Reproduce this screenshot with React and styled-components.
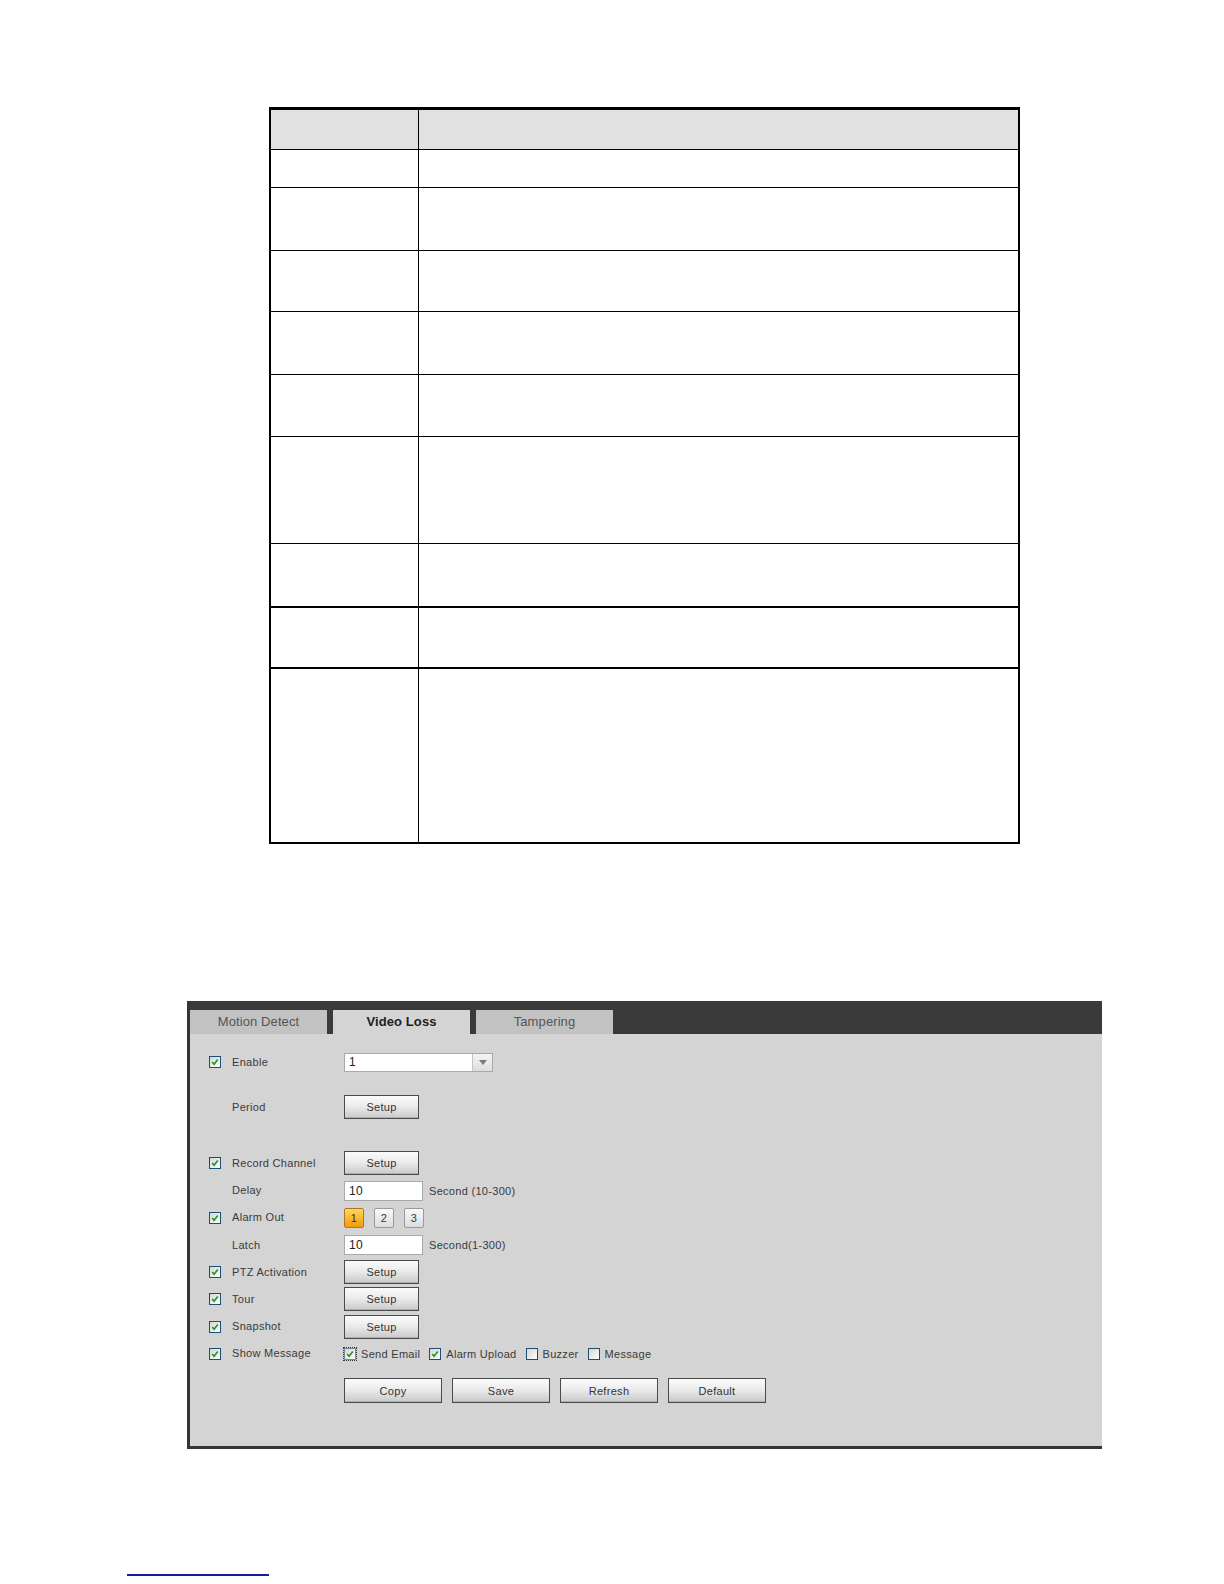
import React from "react"
import styled, { createGlobalStyle, css } from "styled-components"

const GlobalStyle = createGlobalStyle`
  html, body {
    margin: 0;
    padding: 0;
    background: #ffffff;
  }
  body {
    font-family: "Liberation Sans", Arial, sans-serif;
    width: 1224px;
    min-height: 1584px;
  }
`

const Page = styled.div`
  position: relative;
  width: 1224px;
  height: 1584px;
  padding-top: 107px;
  box-sizing: border-box;
  overflow: hidden;
`

/* ---------- parameter table (empty) ---------- */

const Table = styled.table`
  margin-left: 269px;
  width: 751px;
  border-collapse: collapse;
  border-top: 3px solid #000;
  border-left: 2px solid #000;
  border-right: 2px solid #000;
  border-bottom: 2px solid #000;
`

const Cell = styled.td`
  padding: 0;
  border: 1px solid #000;
  border-top-width: ${p => (p.$thick ? 2 : 1)}px;
  height: ${p => p.$h}px;
  box-sizing: border-box;
  background: ${p => (p.$head ? "#e1e1e1" : "#fff")};
  &:first-child {
    width: 148px;
  }
`

const rows = [
  { h: 41, head: true },
  { h: 38 },
  { h: 63 },
  { h: 61 },
  { h: 63 },
  { h: 62 },
  { h: 107 },
  { h: 63 },
  { h: 61, thick: true },
  { h: 175, thick: true },
]

/* ---------- alarm panel ---------- */

const Panel = styled.div`
  margin-top: 157px;
  margin-left: 187px;
  width: 915px;
  height: 448px;
  background: #d4d4d4;
  border-left: 3px solid #353535;
  border-bottom: 3px solid #353535;
  box-sizing: border-box;
  font-size: 11px;
  color: #3a3a3a;
  letter-spacing: 0.3px;
`

const TabBar = styled.div`
  display: flex;
  align-items: flex-end;
  gap: 6px;
  height: 33px;
  background: #3a3a3a;
`

const Tab = styled.div`
  width: 137px;
  height: 24px;
  display: flex;
  align-items: center;
  justify-content: center;
  font-size: 13px;
  letter-spacing: 0.1px;
  color: #555;
  background: #c2c2c2;
  ${p =>
    p.$active &&
    css`
      background: #d4d4d4;
      color: #1e1e1e;
      font-weight: bold;
    `}
`

const Form = styled.div`
  display: flex;
  flex-direction: column;
  padding-left: 19px;
`

const Row = styled.div`
  display: grid;
  grid-template-columns: 23px 112px 1fr;
  align-items: center;
  height: 27.2px;
  margin-top: ${p => p.$top || 0}px;
`

const Label = styled.span`
  line-height: 1;
`

const Controls = styled.div`
  display: flex;
  align-items: center;
  gap: ${p => p.$gap || 0}px;
`

const Box = styled.span`
  display: inline-flex;
  align-items: center;
  justify-content: center;
  width: 10px;
  height: 10px;
  border: 1px solid #1d4f72;
  background: linear-gradient(135deg, #d6d6d6, #fdfdfd);
  box-sizing: content-box;
  flex: none;
  ${p =>
    p.$dotted &&
    css`
      outline: 1px dotted #333;
      outline-offset: 0px;
      border-color: #7a8a96;
    `}
`

const Check = ({ on = true, dotted }) => (
  <Box $dotted={dotted}>
    {on && (
      <svg width="8" height="8" viewBox="0 0 8 8">
        <path d="M1.2 4 L3.1 6.2 L6.8 1.5" fill="none" stroke="#1f9a1f" strokeWidth="1.7" />
      </svg>
    )}
  </Box>
)

const Button = styled.button`
  font-family: "Liberation Sans", Arial, sans-serif;
  font-size: 11px;
  letter-spacing: 0.3px;
  color: #333;
  width: ${p => p.$w || 75}px;
  height: ${p => p.$h || 24}px;
  padding: 0;
  border: 1px solid #4a4a4a;
  border-radius: 0;
  background: linear-gradient(#fbfbfb 0%, #ececec 45%, #c9c9c9 100%);
  box-shadow: inset 0 -1px 0 #b0b0b0;
`

const NumButton = styled.span`
  width: 18px;
  height: 18px;
  display: inline-flex;
  align-items: center;
  justify-content: center;
  font-size: 11px;
  border: 1px solid #9a9a9a;
  border-radius: 2px;
  background: linear-gradient(#fafafa, #dcdcdc);
  ${p =>
    p.$on &&
    css`
      border-color: #b3742a;
      background: linear-gradient(#ffd75a, #f39a0a);
      color: #4a2f00;
    `}
`

const Input = styled.div`
  width: 79px;
  height: 20px;
  background: #fff;
  border: 1px solid #a9a9a9;
  display: flex;
  align-items: center;
  padding-left: 4px;
  box-sizing: border-box;
  font-size: 12px;
  color: #222;
`

const Select = styled.div`
  width: 149px;
  height: 19px;
  background: #fff;
  border: 1px solid #a9a9a9;
  display: flex;
  align-items: stretch;
  box-sizing: border-box;
  font-size: 12px;
  color: #222;
`

const SelectValue = styled.span`
  flex: 1;
  display: flex;
  align-items: center;
  padding-left: 4px;
`

const SelectArrow = styled.span`
  width: 19px;
  border-left: 1px solid #c4c4c4;
  background: linear-gradient(#f4f4f4, #dedede);
  display: flex;
  align-items: center;
  justify-content: center;
`

const Hint = styled.span`
  margin-left: 6px;
`

const Option = styled.span`
  display: inline-flex;
  align-items: center;
  gap: 5px;
  margin-right: 9px;
`

const Actions = styled.div`
  display: flex;
  gap: 10px;
  margin-left: 135px;
  margin-top: 11px;
`

const FootLink = styled.a`
  position: absolute;
  left: 127px;
  top: 1564px;
  width: 142px;
  height: 10px;
  border-bottom: 2px solid #1a1aa6;
`

const SetupRow = ({ label, top }) => (
  <Row $top={top}>
    <Check />
    <Label>{label}</Label>
    <Controls>
      <Button>Setup</Button>
    </Controls>
  </Row>
)

export default function App() {
  return (
    <Page>
      <GlobalStyle />
      <Table>
        <tbody>
          {rows.map((r, i) => (
            <tr key={i}>
              <Cell $h={r.h} $head={r.head} $thick={r.thick} />
              <Cell $h={r.h} $head={r.head} $thick={r.thick} />
            </tr>
          ))}
        </tbody>
      </Table>

      <Panel>
        <TabBar>
          <Tab>Motion Detect</Tab>
          <Tab $active>Video Loss</Tab>
          <Tab>Tampering</Tab>
        </TabBar>
        <Form>
          <Row $top={15}>
            <Check />
            <Label>Enable</Label>
            <Controls>
              <Select>
                <SelectValue>1</SelectValue>
                <SelectArrow>
                  <svg width="8" height="5" viewBox="0 0 8 5">
                    <path d="M0 0 H8 L4 5 Z" fill="#7a7a7a" />
                  </svg>
                </SelectArrow>
              </Select>
            </Controls>
          </Row>

          <Row $top={18}>
            <span />
            <Label>Period</Label>
            <Controls>
              <Button>Setup</Button>
            </Controls>
          </Row>

          <SetupRow label="Record Channel" top={29} />

          <Row>
            <span />
            <Label>Delay</Label>
            <Controls>
              <Input>10</Input>
              <Hint>Second (10-300)</Hint>
            </Controls>
          </Row>

          <Row>
            <Check />
            <Label>Alarm Out</Label>
            <Controls $gap={10}>
              <NumButton $on>1</NumButton>
              <NumButton>2</NumButton>
              <NumButton>3</NumButton>
            </Controls>
          </Row>

          <Row>
            <span />
            <Label>Latch</Label>
            <Controls>
              <Input>10</Input>
              <Hint>Second(1-300)</Hint>
            </Controls>
          </Row>

          <SetupRow label="PTZ Activation" />
          <SetupRow label="Tour" />
          <SetupRow label="Snapshot" />

          <Row>
            <Check />
            <Label>Show Message</Label>
            <Controls>
              <Option>
                <Check dotted />
                Send Email
              </Option>
              <Option>
                <Check />
                Alarm Upload
              </Option>
              <Option>
                <Check on={false} />
                Buzzer
              </Option>
              <Option>
                <Check on={false} />
                Message
              </Option>
            </Controls>
          </Row>

          <Actions>
            <Button $w={98} $h={25}>Copy</Button>
            <Button $w={98} $h={25}>Save</Button>
            <Button $w={98} $h={25}>Refresh</Button>
            <Button $w={98} $h={25}>Default</Button>
          </Actions>
        </Form>
      </Panel>

      <FootLink href="#" aria-label="link" />
    </Page>
  )
}
